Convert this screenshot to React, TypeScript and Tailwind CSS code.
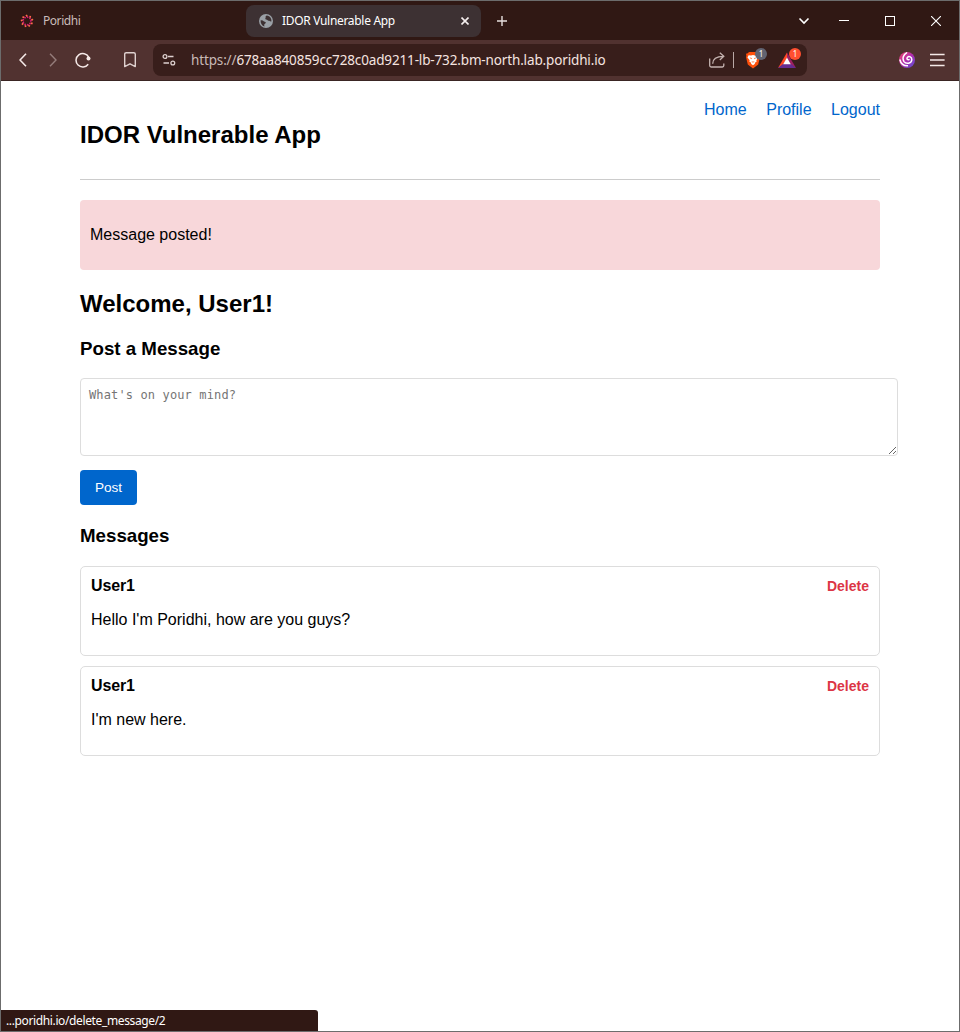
import React from "react";

const uiFont = "font-['Noto_Sans','Open_Sans',sans-serif]";

function Spinner() {
  const dots = [0, 40, 80, 120, 160, 200, 240, 280, 320];
  return (
    <svg className="ml-[19px] shrink-0" width="14" height="14" viewBox="0 0 14 14">
      {dots.map((a) => (
        <g key={a} transform={`rotate(${a} 7 7)`}>
          <path d="M6.2 .9L7.2 2.6" stroke="#ff6a4a" strokeWidth="1.7" />
          <path d="M7.2 2.4L8 3.9" stroke="#d81b78" strokeWidth="1.5" />
        </g>
      ))}
    </svg>
  );
}

function Globe() {
  return (
    <svg className="ml-3 shrink-0" width="16" height="16" viewBox="0 0 16 16">
      <circle cx="8" cy="8" r="7" fill="#9aa0a6" />
      <path d="M8.8 2.4C7.4 3.2 7.2 4 7.8 4.8C7 5.4 7 6.2 8.2 6.6C9.2 6.8 9.6 7.6 10.6 7.8C11.8 7.8 12 8.8 13.4 8.4C13.8 5.4 12 2.8 8.8 2.4Z" fill="#3d3133" />
      <path d="M2.6 7.4C3.8 7.2 5.2 7.6 6 8.4C7.2 8.4 8 9.2 7.8 10C6.8 10.4 6.9 11.4 6.2 11.6C6 12.4 6.6 13 6.4 13.4C4 12.7 2.4 10.4 2.6 7.4Z" fill="#3d3133" />
    </svg>
  );
}

function TabStrip() {
  return (
    <div className="flex h-[39px] shrink-0 items-center bg-[#301814]">
      <div className="flex w-[245px] items-center">
        <Spinner />
        <span className="ml-[9px] text-[12px] tracking-[-0.45px] text-[#c9bcba]">Poridhi</span>
      </div>
      <div className="flex h-8 w-[235px] items-center rounded-lg bg-[#3d3133]">
        <Globe />
        <span className="ml-2 grow whitespace-nowrap text-[12px] tracking-[-0.31px] text-white">IDOR Vulnerable App</span>
        <svg className="mr-3 shrink-0" width="8" height="8" viewBox="0 0 8 8">
          <path d="M.5 .5L7.5 7.5M7.5 .5L.5 7.5" stroke="#f5eeee" strokeWidth="1.6" />
        </svg>
      </div>
      <svg className="ml-4 shrink-0" width="10" height="10" viewBox="0 0 10 10">
        <path d="M5 0V10M0 5H10" stroke="#e6dedd" strokeWidth="1.4" />
      </svg>
      <svg className="ml-auto shrink-0" width="12" height="8" viewBox="0 0 12 8">
        <path d="M1.5 1.5L6 6L10.5 1.5" fill="none" stroke="#fff" strokeWidth="1.6" />
      </svg>
      <svg className="ml-[29px] shrink-0" width="10" height="10" viewBox="0 0 10 10">
        <path d="M0 4.5H10" stroke="#fff" />
      </svg>
      <svg className="ml-9 shrink-0" width="10" height="10" viewBox="0 0 10 10">
        <rect x=".5" y=".5" width="9" height="9" fill="none" stroke="#fff" />
      </svg>
      <svg className="ml-9 mr-[18px] shrink-0" width="10" height="10" viewBox="0 0 10 10">
        <path d="M0 0L10 10M10 0L0 10" stroke="#fff" strokeWidth="1.1" />
      </svg>
    </div>
  );
}

function AddressBar() {
  return (
    <div className="ml-[17px] flex h-8 w-[654px] items-center rounded-lg bg-[#381e1b]">
      <svg className="ml-[9px] shrink-0" width="14" height="14" viewBox="0 0 14 14" fill="none" stroke="#ddd0cf" strokeWidth="1.3">
        <circle cx="3" cy="3.5" r="1.9" />
        <path d="M6 3.5H11.5M1.5 10H7" />
        <circle cx="10.8" cy="10" r="1.9" />
      </svg>
      <span className="ml-[15px] w-[502px] grow whitespace-nowrap text-[13.5px] tracking-[-0.145px] text-[#f5e4e0]">
        <span className="text-[#c8b9b6]">https://</span>678aa840859cc728c0ad9211-lb-732.bm-north.lab.poridhi.io
      </span>
      <svg className="shrink-0" width="16" height="16" viewBox="0 0 16 16" fill="none" stroke="#c4b3b0" strokeWidth="1.3">
        <path d="M.7 6.5V13.6Q.7 15 2.1 15H13.4Q14.8 15 14.8 13.6V11.5" />
        <path d="M3.7 11.7C3.7 7 7 4.3 14.5 4.3M10.8 .8L14.8 4.3L10.8 8" />
      </svg>
      <span className="ml-2 h-4 w-px shrink-0 bg-[#b9a9a6]" />
      <span className="relative ml-[11px] h-[18px] w-[33px] shrink-0">
        <svg width="16" height="18" viewBox="0 0 16 18">
          <path d="M4 1H12L13.2 2.3L15 2.7L14.6 5L15 6L13.2 13.5L8 17.5L2.8 13.5L1 6L1.4 5L1 2.7L2.8 2.3Z" fill="#ff500b" />
          <path d="M3.6 4.2L6 4.6L8 4L10 4.6L12.4 4.2L13.5 6.4L11.3 9.2L11.7 10.6L9.6 12.1L10.1 12.8L8 14.3L5.9 12.8L6.4 12.1L4.3 10.6L4.7 9.2L2.5 6.4Z" fill="#fff" />
          <path d="M4.5 6.5L6.8 7.1L6.4 8.2ZM11.5 6.5L9.2 7.1L9.6 8.2ZM6.3 10.2L8 10.7L9.7 10.2L8 11.8Z" fill="#ff500b" />
        </svg>
        <span className="absolute left-[10px] top-[-3px] h-3 w-3 rounded-full bg-[#626472] text-center text-[8px] leading-3 text-white">1</span>
      </span>
      <span className="relative mr-[9px] h-[18px] w-5 shrink-0">
        <svg width="20" height="18" viewBox="0 0 20 18">
          <path d="M9 1.5L0 17L5 14L9 7Z" fill="#ff4724" />
          <path d="M9 1.5L18 17L13 14L9 7Z" fill="#9e1f63" />
          <path d="M0 17L5 13H13L18 17Z" fill="#662d91" />
          <path d="M9 6.5L12.8 13.2H5.2Z" fill="#fff" />
        </svg>
        <span className="absolute left-[11px] top-[-3px] h-3 w-3 rounded-full bg-[#ff4f30] text-center text-[8px] leading-3 text-white">1</span>
      </span>
    </div>
  );
}

function Toolbar() {
  return (
    <div className="flex h-[41px] shrink-0 items-center border-b border-[#3a2523] bg-[#513230]">
      <svg className="ml-[18px] shrink-0" width="8" height="14" viewBox="0 0 8 14">
        <path d="M7 .7L1 7L7 13.3" fill="none" stroke="#f5e9e7" strokeWidth="1.6" />
      </svg>
      <svg className="ml-[22px] shrink-0" width="8" height="14" viewBox="0 0 8 14">
        <path d="M1 .7L7 7L1 13.3" fill="none" stroke="#957d7b" strokeWidth="1.4" />
      </svg>
      <svg className="ml-[18px] shrink-0" width="16" height="16" viewBox="0 0 16 16">
        <path d="M13.2 12.2A6.7 6.7 0 1 1 13.7 5.2" fill="none" stroke="#f5e9e7" strokeWidth="1.5" />
        <circle cx="13.5" cy="6.5" r="2" fill="#f5e9e7" />
      </svg>
      <svg className="ml-[33px] shrink-0" width="12" height="16" viewBox="0 0 12 16">
        <path d="M.7 14.6V2.2Q.7 .7 2.2 .7H9.8Q11.3 .7 11.3 2.2V14.6L6 11.8Z" fill="none" stroke="#dfd1cf" strokeWidth="1.4" strokeLinejoin="round" />
      </svg>
      <AddressBar />
      <svg className="ml-[92px] shrink-0" width="16" height="16" viewBox="0 0 16 16">
        <defs>
          <linearGradient id="swirl" x1="0" y1="0" x2="1" y2="1">
            <stop offset="0" stopColor="#f04668" />
            <stop offset=".5" stopColor="#b02cae" />
            <stop offset="1" stopColor="#5552d8" />
          </linearGradient>
        </defs>
        <circle cx="8" cy="8" r="8" fill="url(#swirl)" />
        <path d="M7.6 .8C4.4 2.6 3 6.6 5 9.6C7 12.4 12.2 11.8 12.8 8C13 5 10 3.6 8.4 5.4C7.4 6.8 8.6 8.2 10 7.6" fill="none" stroke="#fff" strokeWidth="1.5" strokeLinecap="round" />
        <path d="M.8 7.5C1.8 11.6 5 14 9 13.8" fill="none" stroke="#fff" strokeWidth="1.5" />
      </svg>
      <svg className="ml-[15px] shrink-0" width="16" height="14" viewBox="0 0 16 14">
        <path d="M0 1.5H14.6M0 7H14.6M0 12.5H14.6" stroke="#f5e9e7" strokeWidth="1.3" />
      </svg>
    </div>
  );
}

function Message({ text }: { text: string }) {
  return (
    <article className="mb-[10px] h-[90px] rounded-[5px] border border-[#ddd] px-[10px] pt-[10px]">
      <div className="flex h-[18px] items-start justify-between leading-[18px]">
        <strong className="tracking-[-0.15px]">User1</strong>
        <button className="pt-px text-[14px] font-bold leading-4 text-[#dc3545]">Delete</button>
      </div>
      <p className="mt-4 leading-[18px]">{text}</p>
    </article>
  );
}

export default function App() {
  return (
    <div className="flex h-[1032px] w-[960px] flex-col overflow-hidden border border-[#6c6c6c] bg-white">
      <header className={`flex flex-col ${uiFont}`}>
        <TabStrip />
        <Toolbar />
      </header>
      <main className="ml-[79px] w-[800px] grow font-['Liberation_Sans',Arial,sans-serif] text-base text-black">
        <div className="flex h-[99px] justify-between border-b border-[#ccc]">
          <h2 className="pt-10 text-2xl font-bold leading-7">IDOR Vulnerable App</h2>
          <nav className="flex gap-[19.5px] pt-5 leading-[18px] text-[#0066cc]">
            <a>Home</a>
            <a>Profile</a>
            <a>Logout</a>
          </nav>
        </div>
        <div className="mt-5 flex h-[70px] items-center rounded-[4px] bg-[#f8d7da] px-[10px]">
          <p className="leading-[18px]">Message posted!</p>
        </div>
        <h2 className="mt-5 text-2xl font-bold leading-7">Welcome, User1!</h2>
        <h3 className="mt-5 text-[18.72px] font-bold leading-[22px]">Post a Message</h3>
        <textarea
          className="mt-[18px] block h-[78px] w-[818px] resize rounded-[4px] border border-[#ddd] p-2 font-['DejaVu_Sans_Mono',monospace] text-[12px] leading-4 tracking-[0.13px] placeholder:text-[#757575]"
          placeholder="What's on your mind?"
        />
        <button className="mt-[14px] block h-[35px] w-[57px] rounded-[4px] bg-[#0066cc] pt-px text-[13.6px] text-white">Post</button>
        <h3 className="mb-[19px] mt-5 text-[18.72px] font-bold leading-[22px]">Messages</h3>
        <Message text="Hello I'm Poridhi, how are you guys?" />
        <Message text="I'm new here." />
      </main>
      <footer className={`h-[21px] w-[317px] shrink-0 rounded-tr-[3px] bg-[#301814] pl-[5px] text-[12px] leading-[21px] tracking-[-0.37px] text-white ${uiFont}`}>
        ...poridhi.io/delete_message/2
      </footer>
    </div>
  );
}
